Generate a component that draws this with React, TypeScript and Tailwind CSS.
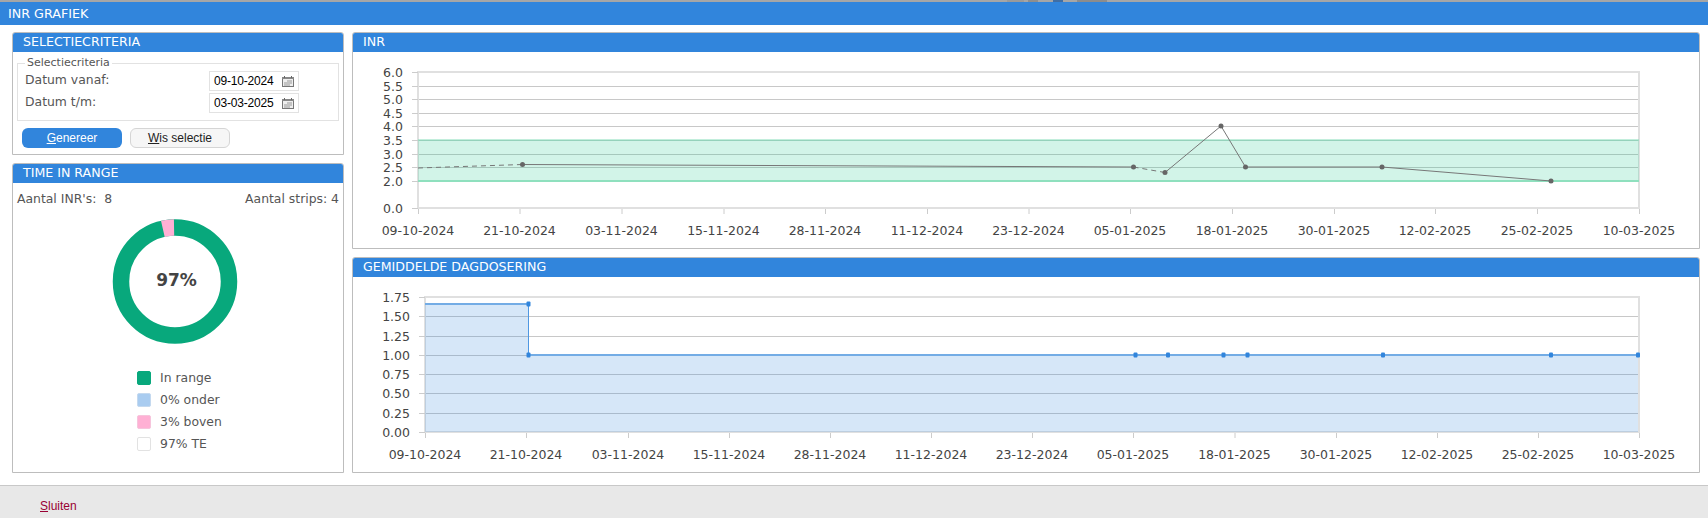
const INR_TICKS = [
  { x: 418, label: '09-10-2024' }, { x: 519.5, label: '21-10-2024' }, { x: 621.5, label: '03-11-2024' },
  { x: 723.5, label: '15-11-2024' }, { x: 825, label: '28-11-2024' }, { x: 927, label: '11-12-2024' },
  { x: 1028.5, label: '23-12-2024' }, { x: 1130, label: '05-01-2025' }, { x: 1232, label: '18-01-2025' },
  { x: 1334, label: '30-01-2025' }, { x: 1435, label: '12-02-2025' }, { x: 1537, label: '25-02-2025' },
  { x: 1639, label: '10-03-2025' },
];
const DOSE_TICKS = [
  { x: 425, label: '09-10-2024' }, { x: 526, label: '21-10-2024' }, { x: 628, label: '03-11-2024' },
  { x: 729, label: '15-11-2024' }, { x: 830, label: '28-11-2024' }, { x: 931, label: '11-12-2024' },
  { x: 1032, label: '23-12-2024' }, { x: 1133, label: '05-01-2025' }, { x: 1234.5, label: '18-01-2025' },
  { x: 1336, label: '30-01-2025' }, { x: 1437, label: '12-02-2025' }, { x: 1538, label: '25-02-2025' },
  { x: 1639, label: '10-03-2025' },
];
const INR_Y = [
  { y: 72, label: '6.0' }, { y: 86, label: '5.5' }, { y: 99, label: '5.0' }, { y: 113, label: '4.5' },
  { y: 126, label: '4.0' }, { y: 140, label: '3.5' }, { y: 154, label: '3.0' }, { y: 167, label: '2.5' },
  { y: 181, label: '2.0' }, { y: 208, label: '0.0' },
];
const DOSE_Y = [
  { y: 297, label: '1.75' }, { y: 316, label: '1.50' }, { y: 336, label: '1.25' }, { y: 355, label: '1.00' },
  { y: 374, label: '0.75' }, { y: 393, label: '0.50' }, { y: 413, label: '0.25' }, { y: 432, label: '0.00' },
];
const INR_POINTS = [[522.5, 164.5], [1133.5, 167], [1165, 172.5], [1221, 126], [1245.5, 167], [1382, 167], [1551, 181]];
const DOSE_POINTS = [[1135.5, 355], [1168, 355], [1223.5, 355], [1247.5, 355], [1383, 355], [1551, 355]];
const LEGEND = [
  { color: 'bg-[#08a87c] border-[#08a87c]', label: 'In range' },
  { color: 'bg-[#a9ccf0] border-[#c4d9ef]', label: '0% onder' },
  { color: 'bg-[#ffb0d4] border-[#f6c5dc]', label: '3% boven' },
  { color: 'bg-white border-[#e2e2e2]', label: '97% TE' },
];

function Panel({ title, className, children }: { title: string; className: string; children: React.ReactNode }) {
  return (
    <section className={`flex flex-col border border-[#bdbdbd] rounded-t-[3px] bg-white ${className}`}>
      <h2 className="h-[19px] shrink-0 bg-[#3185dc] pl-[10px] text-[12.6px] leading-[18px] font-normal text-white rounded-t-[2px]">{title}</h2>
      {children}
    </section>
  );
}

function DateField({ label, value }: { label: string; value: string }) {
  return (
    <div className="flex items-start h-[22px]">
      <span className="w-[184px] text-[12.4px] leading-[18px] text-[#555]">{label}</span>
      <div className="flex items-center w-[90px] h-[20px] border border-[#e2e2e2] pl-[4px]">
        <span className="w-[68px] font-['Liberation_Sans',sans-serif] text-[12px] tracking-[-0.2px] text-black">{value}</span>
        <svg width="12" height="11" viewBox="0 0 12 11">
          <rect x="0.5" y="1.5" width="11" height="9" fill="#eee" stroke="#777" />
          <rect x="0" y="1" width="12" height="2" fill="#888" />
          <path d="M2.5 0v2M9.5 0v2" stroke="#666" />
          <path d="M5 5h5M2 7h8M2 9h6" stroke="#999" />
        </svg>
      </div>
    </div>
  );
}

function AxisTexts({ ticks, yLabels, labelY, axisX, left, bottom }: {
  ticks: { x: number; label: string }[];
  yLabels: { y: number; label: string }[];
  labelY: number;
  axisX: number;
  left: number;
  bottom: number;
}) {
  return (
    <g fontSize="12.5" fill="#444">
      {ticks.map(t => (
        <g key={t.x}>
          <line x1={t.x + 0.5} x2={t.x + 0.5} y1={bottom} y2={bottom + 5} stroke="#ccc" />
          <text x={t.x} y={labelY} textAnchor="middle">{t.label}</text>
        </g>
      ))}
      {yLabels.map(t => (
        <g key={t.label}>
          <line x1={left - 6} x2={left} y1={t.y + 0.5} y2={t.y + 0.5} stroke="#ccc" />
          <text x={axisX} y={t.y + 4.5} textAnchor="end">{t.label}</text>
        </g>
      ))}
    </g>
  );
}

function InrChart() {
  return (
    <svg width="1346" height="195" viewBox="353 52 1346 195" className="block font-['DejaVu_Sans',sans-serif]">
      <rect x="418" y="72" width="1221" height="136" fill="#fff" stroke="#e0e0e0" strokeWidth="2" />
      {INR_Y.slice(1, -1).map(t => (
        <line key={t.label} x1="419" x2="1638" y1={t.y + 0.5} y2={t.y + 0.5} stroke="#c8c8c8" />
      ))}
      <rect x="418" y="140" width="1221" height="41" fill="#1cc98a" fillOpacity="0.2" />
      <line x1="418" x2="1639" y1="140" y2="140" stroke="#84dcb9" />
      <line x1="418" x2="1639" y1="181" y2="181" stroke="#8fe0be" strokeWidth="2" />
      <AxisTexts ticks={INR_TICKS} yLabels={INR_Y} labelY={235} axisX={403} left={418} bottom={209} />
      <path d="M418 168 L522.5 164.5" stroke="#777" strokeDasharray="5 4" fill="none" />
      <path d="M1133.5 167 L1165 172.5" stroke="#777" strokeDasharray="5 4" fill="none" />
      <path d="M522.5 164.5 L1133.5 167" stroke="#777" fill="none" />
      <path d="M1165 172.5 L1221 126 L1245.5 167 L1382 167 L1551 181" stroke="#777" fill="none" />
      {INR_POINTS.map(([x, y]) => <circle key={x} cx={x} cy={y} r="2.5" fill="#666" />)}
    </svg>
  );
}

function DoseChart() {
  return (
    <svg width="1346" height="194" viewBox="353 277 1346 194" className="block font-['DejaVu_Sans',sans-serif]">
      <rect x="425" y="297" width="1214" height="135" fill="#fff" stroke="#e0e0e0" strokeWidth="2" />
      {DOSE_Y.slice(1, -1).map(t => (
        <line key={t.label} x1="426" x2="1638" y1={t.y + 0.5} y2={t.y + 0.5} stroke="#c8c8c8" />
      ))}
      <path d="M425 304 H528.5 V355 H1638 V432 H425 Z" fill="#3185dc" fillOpacity="0.2" />
      <path d="M425 304 H528.5 M528.5 355 H1638" stroke="#73ace5" strokeWidth="2" fill="none" />
      <line x1="528.5" x2="528.5" y1="304" y2="355" stroke="#4f98e2" />
      <AxisTexts ticks={DOSE_TICKS} yLabels={DOSE_Y} labelY={459} axisX={410} left={425} bottom={433} />
      {[[528.5, 304], [528.5, 355], ...DOSE_POINTS, [1638, 355]].map(([x, y]) => (
        <rect key={`${x}-${y}`} x={x - 2} y={y - 2.5} width="4" height="5" rx="1" fill="#3185dc" />
      ))}
    </svg>
  );
}

function Donut() {
  const r = 54;
  const cx = 70;
  const cy = 70.5;
  const a1 = (-13 * Math.PI) / 180;
  const a2 = (-1 * Math.PI) / 180;
  const pink = `M${cx + r * Math.sin(a1)} ${cy - r * Math.cos(a1)} A${r} ${r} 0 0 1 ${cx + r * Math.sin(a2)} ${cy - r * Math.cos(a2)}`;
  return (
    <svg width="140" height="141" viewBox="0 0 140 141" className="block">
      <circle cx={cx} cy={cy} r={r} fill="none" stroke="#08a87c" strokeWidth="16.5" />
      <path d={pink} fill="none" stroke="#ffb0d4" strokeWidth="16.5" />
      <text x="71.5" y="74.5" textAnchor="middle" fontSize="17" fontWeight="700" fill="#444">97%</text>
    </svg>
  );
}

export default function App() {
  return (
    <div className="flex flex-col w-[1708px] h-[518px] overflow-hidden bg-white font-['DejaVu_Sans',sans-serif]">
      {/* strook van het scherm erachter */}
      <div className="flex h-[2px] shrink-0 bg-[#a6a6a6]">
        <span className="ml-[1007px] w-[17px] bg-[#9a9a9a]" />
        <span className="ml-[4px] w-[10px] bg-[#8e8e8e]" />
        <span className="ml-[15px] w-[10px] bg-[#3f6ea5]" />
        <span className="ml-[14px] w-[30px] bg-[#8c8c8c]" />
      </div>
      <header className="h-[23px] shrink-0 bg-[#3185dc] pl-[8px] text-[12.7px] leading-[23px] text-white">INR GRAFIEK</header>

      <main className="flex gap-[8px] h-[460px] shrink-0 pt-[7px] pl-[12px]">
        <div className="flex flex-col gap-[8px] w-[332px]">
          <Panel title="SELECTIECRITERIA" className="h-[123px]">
            <fieldset className="mx-[4px] mt-[5px] h-[64px] border border-[#e2e2e2] px-[7px] pt-[2px]">
              <legend className="px-[2px] text-[11px] leading-[12px] text-[#555]">Selectiecriteria</legend>
              <DateField label="Datum vanaf:" value="09-10-2024" />
              <DateField label="Datum t/m:" value="03-03-2025" />
            </fieldset>
            <div className="flex gap-[8px] mt-[7px] ml-[9px] font-['Liberation_Sans',sans-serif] text-[12px]">
              <button className="w-[100px] h-[20px] rounded-[6px] bg-[#3185dc] text-white"><u>G</u>enereer</button>
              <button className="w-[100px] h-[20px] rounded-[6px] border border-[#d5d5d5] bg-[#f6f6f6] text-[#222]"><u>W</u>is selectie</button>
            </div>
          </Panel>

          <Panel title="TIME IN RANGE" className="h-[310px]">
            <div className="flex justify-between px-[4px] pt-[8px] text-[12.4px] leading-[16px] text-[#555]">
              <span>Aantal INR's:&nbsp; 8</span>
              <span>Aantal strips: 4</span>
            </div>
            <div className="flex justify-center mt-[4px] pr-[7px]">
              <Donut />
            </div>
            <ul className="flex flex-col gap-[8px] mt-[19px] ml-[124px]">
              {LEGEND.map(item => (
                <li key={item.label} className="flex items-center gap-[9px] h-[14px] text-[12.4px] text-[#555]">
                  <span className={`w-[14px] h-[14px] rounded-[2px] border ${item.color}`} />
                  {item.label}
                </li>
              ))}
            </ul>
          </Panel>
        </div>

        <div className="flex flex-col gap-[8px] w-[1348px]">
          <Panel title="INR" className="h-[217px]">
            <InrChart />
          </Panel>
          <Panel title="GEMIDDELDE DAGDOSERING" className="h-[216px]">
            <DoseChart />
          </Panel>
        </div>
      </main>

      <footer className="flex-1 border-t border-[#c8c8c8] bg-[#e8e8e8] pl-[40px] pt-[13px] font-['Liberation_Sans',sans-serif] text-[12px] leading-[14px] text-[#990033]">
        <u>S</u>luiten
      </footer>
    </div>
  );
}
